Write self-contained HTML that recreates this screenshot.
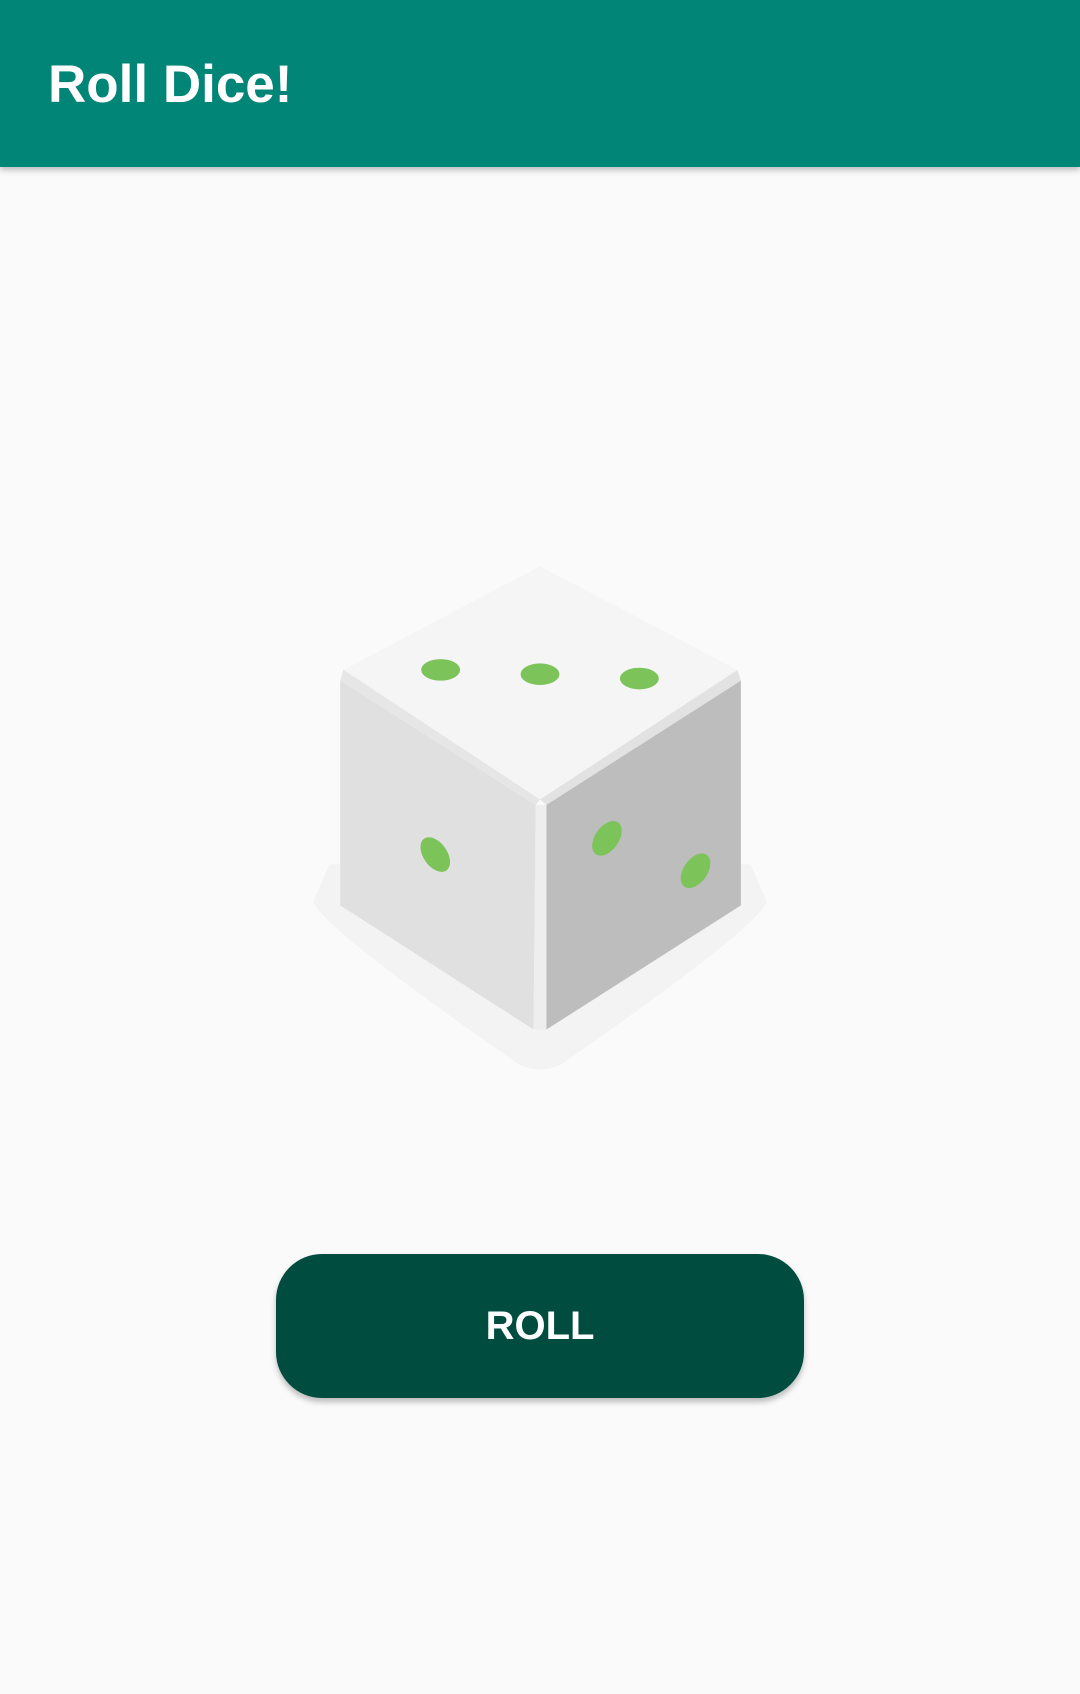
<!DOCTYPE html>
<html><head><meta charset="utf-8"><style>
html,body{margin:0;padding:0;width:1080px;height:1694px;background:#FAFAFA;overflow:hidden;font-family:"Liberation Sans",Roboto,sans-serif}
.bar{position:absolute;left:0;top:0;width:1080px;height:167px;background:#008577;box-shadow:0 3px 6px rgba(0,0,0,.25);z-index:2}
.bar span{position:absolute;left:48px;top:53px;color:#fff;font-size:53px;font-weight:bold;line-height:64px}
.btn{position:absolute;left:276px;top:1254px;width:528px;height:144px;border-radius:46px;background:#004D40;box-shadow:0 4px 6px rgba(0,0,0,.25);color:#fff;font-size:40px;font-weight:bold;text-align:center;line-height:144px;letter-spacing:0px}
svg{position:absolute;left:0;top:0}
</style></head><body>
<svg width="1080" height="1694" viewBox="0 0 1000 1568">
<path d="M305 800 L695 800 L710 835 Q700 860 520 985 Q500 995 480 985 Q300 860 290 835 Z" fill="#F3F3F3"/>
<path d="M500 524 L683 620 L500 740 L318 620 Z" fill="#F5F5F5"/>
<path d="M318 620 L315 630 L496 745 L500 740 Z" fill="#E6E6E6"/>
<path d="M683 620 L686 630 L506 745 L500 740 Z" fill="#E2E2E2"/>
<path d="M315 630 L496 745 L494 953 L315 838 Z" fill="#E0E0E0"/>
<path d="M496 745 L506 745 L506 953 L494 953 Z" fill="#EEEEEE"/>
<path d="M506 745 L686 630 L686 838 L506 953 Z" fill="#BDBDBD"/>
<g fill="#7CC35A">
<ellipse cx="408" cy="620" rx="18" ry="10"/>
<ellipse cx="500" cy="624" rx="18" ry="10"/>
<ellipse cx="592" cy="628" rx="18" ry="10"/>
<ellipse cx="403" cy="791" rx="11" ry="18" transform="rotate(-35 403 791)"/>
<ellipse cx="562" cy="776" rx="11" ry="18" transform="rotate(35 562 776)"/>
<ellipse cx="644" cy="806" rx="11" ry="18" transform="rotate(35 644 806)"/>
</g>
</svg>
<div class="bar"><span>Roll Dice!</span></div>
<div class="btn">ROLL</div>
</body></html>
